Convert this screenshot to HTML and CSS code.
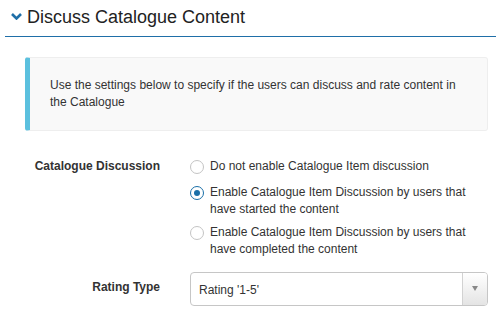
FILE: index.html
```html
<!DOCTYPE html>
<html>
<head>
<meta charset="utf-8">
<link rel="stylesheet" href="styles.css">
</head>
<body>
<div class="page">
  <h2 class="section-title">
    <svg class="chevron" width="11" height="7" viewBox="0 0 11 7"><path d="M1 1 L5.5 5.5 L10 1" fill="none" stroke="#1f6fa8" stroke-width="2.6" stroke-linecap="butt"/></svg>
    <span>Discuss Catalogue Content</span>
  </h2>
  <div class="callout">Use the settings below to specify if the users can discuss and rate content in the Catalogue</div>
  <div class="form-row">
    <div class="form-label">Catalogue Discussion</div>
    <div class="radios">
      <label class="radio first"><span class="circle"></span><span class="radio-text">Do not enable Catalogue Item discussion</span></label>
      <label class="radio second"><span class="circle checked"></span><span class="radio-text">Enable Catalogue Item Discussion by users that have started the content</span></label>
      <label class="radio"><span class="circle"></span><span class="radio-text">Enable Catalogue Item Discussion by users that have completed the content</span></label>
    </div>
  </div>
  <div class="form-row rating-row">
    <div class="form-label">Rating Type</div>
    <div class="select">
      <span class="select-value">Rating '1-5'</span>
      <span class="select-arrow"><span class="triangle"></span></span>
    </div>
  </div>
</div>
</body>
</html>
```

FILE: styles.css
```css
* { box-sizing: border-box; }
html, body { margin: 0; padding: 0; background: #fff; }
body {
  font-family: "Liberation Sans", Arial, sans-serif;
  font-size: 12px;
  line-height: 17px;
  color: #333;
}
.page { width: 496px; }
.section-title {
  margin: 0 0 0 5px;
  padding: 7px 0 9px 6px;
  font-size: 18px;
  line-height: 20px;
  font-weight: normal;
  color: #222;
  border-bottom: 1px solid #1f6fa8;
  display: flex;
  align-items: center;
}
.chevron { display: block; margin-right: 5px; margin-top: -2px; }
.callout {
  margin: 20px 8px 0 25px;
  padding: 19px 20px 19px 20px;
  background: #f9f9f9;
  border: 1px solid #eee;
  border-left: 5px solid #5bc0de;
  border-radius: 3px;
}
.form-row {
  display: grid;
  grid-template-columns: 160px 1fr;
  column-gap: 30px;
  margin: 27px 8px 0 0;
}
.form-label {
  text-align: right;
  font-weight: bold;
}
.radios { display: flex; flex-direction: column; }
.radio { display: flex; align-items: flex-start; gap: 6px; line-height: 17px; }
.radio.first { margin-bottom: 9px; }
.radio.second { margin-bottom: 6px; }
.radio-text { flex: 1; }
.circle {
  flex: none;
  width: 14px;
  height: 14px;
  margin-top: 2px;
  border: 1px solid #c4c4c4;
  border-radius: 50%;
  background: #fff;
  position: relative;
}
.circle.checked { border: 1.5px solid #1a6fa8; }
.circle.checked::after {
  content: "";
  position: absolute;
  left: 2.5px; top: 2.5px;
  width: 6px; height: 6px;
  border-radius: 50%;
  background: #1a6fa8;
}
.rating-row { margin-top: 14px; align-items: center; }
.rating-row .form-label { margin-top: -3px; }
.select {
  display: flex;
  height: 34px;
  border: 1px solid #c6c6c6;
  border-radius: 4px;
  overflow: hidden;
  align-items: stretch;
}
.select-value { flex: 1; padding: 9px 0 0 8px; }
.select-arrow {
  width: 25px;
  border-left: 1px solid #d2d2d2;
  background: linear-gradient(#ffffff, #e4e4e4);
  display: flex;
  align-items: center;
  justify-content: center;
}
.triangle {
  width: 0; height: 0;
  border-left: 3.5px solid transparent;
  border-right: 3.5px solid transparent;
  border-top: 5px solid #888;
  margin-top: -2px;
}
```
